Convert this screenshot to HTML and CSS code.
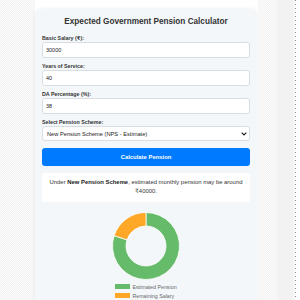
FILE: index.html
```html
<!DOCTYPE html>
<html lang="en">
<head>
<meta charset="utf-8">
<title>Expected Government Pension Calculator</title>
<link rel="stylesheet" href="styles.css">
</head>
<body>
<div class="page">
  <div class="gutter"></div>
  <main class="card">
    <h1 class="title">Expected Government Pension Calculator</h1>
    <div class="field">
      <label class="label" for="salary">Basic Salary (₹):</label>
      <input class="input" id="salary" type="text" value="30000">
    </div>
    <div class="field">
      <label class="label" for="years">Years of Service:</label>
      <input class="input" id="years" type="text" value="40">
    </div>
    <div class="field">
      <label class="label" for="da">DA Percentage (%):</label>
      <input class="input" id="da" type="text" value="38">
    </div>
    <div class="field">
      <label class="label" for="scheme">Select Pension Scheme:</label>
      <div class="select-wrap">
        <select class="select" id="scheme">
          <option>New Pension Scheme (NPS - Estimate)</option>
          <option>Old Pension Scheme (OPS)</option>
        </select>
        <svg class="chev" width="6" height="4" viewBox="0 0 6 4"><path d="M0.7 0.7 L3 3 L5.3 0.7" fill="none" stroke="#222" stroke-width="1.2"/></svg>
      </div>
    </div>
    <button class="button" type="button">Calculate Pension</button>
    <div class="result">Under <b>New Pension Scheme</b>, estimated monthly pension may be around ₹40000.</div>
    <div class="chart">
      <svg width="68" height="68" viewBox="0 0 68 68">
        <path d="M34 0.5 A33.5 33.5 0 1 1 2.14 23.65 L14.98 27.82 A20 20 0 1 0 34 14 Z" fill="#66bb6a" stroke="#fff" stroke-width="0.8"/>
        <path d="M2.14 23.65 A33.5 33.5 0 0 1 34 0.5 L34 14 A20 20 0 0 0 14.98 27.82 Z" fill="#ffa726" stroke="#fff" stroke-width="0.8"/>
      </svg>
      <ul class="legend">
        <li class="legend-item"><span class="swatch swatch-green"></span>Estimated Pension</li>
        <li class="legend-item"><span class="swatch swatch-orange"></span>Remaining Salary</li>
      </ul>
    </div>
  </main>
  <div class="side"></div>
  <div class="band"></div>
  <div class="side-thin"></div>
  <div class="dots"></div>
  <div class="end"></div>
</div>
</body>
</html>
```
FILE: styles.css
```css
* { box-sizing: border-box; }
html, body { margin: 0; padding: 0; }
body {
  font-family: "Liberation Sans", "DejaVu Sans", Arial, sans-serif;
  color: #333;
  background: #fff;
}
.page {
  display: flex;
  height: 300px;
  overflow: hidden;
}
.gutter, .side, .side-thin {
  background: repeating-conic-gradient(#f3f3f3 0 25%, #fbfbfb 0 50%) 0 0 / 2px 2px;
}
.gutter { width: 35px; flex: none; }
.side { width: 19px; flex: none; }
.band { width: 16px; flex: none; background: #f2f2f2; }
.side-thin { width: 2px; flex: none; }
.dots {
  width: 1px; flex: none;
  background: repeating-linear-gradient(to bottom, #8a8a8a 0 1px, transparent 1px 4px);
}
.end { width: 4px; flex: none; background: #fff; }

.card {
  width: 223px;
  flex: none;
  margin-top: 9px;
  padding: 8px 8px 0 7px;
  background: #f4f7fa;
  border-radius: 7px 7px 0 0;
  box-shadow: 0 0 4px rgba(0,0,0,0.07);
  display: flex;
  flex-direction: column;
}
.title {
  margin: 0 0 7px;
  font-size: 8.2px;
  line-height: 10px;
  font-weight: bold;
  text-align: center;
  color: #333;
}
.field {
  display: flex;
  flex-direction: column;
  margin-bottom: 4px;
}
.label {
  font-size: 5.3px;
  line-height: 8px;
  font-weight: bold;
  color: #333;
}
.input, .select {
  display: block;
  width: 100%;
  height: 16px;
  border: 1px solid #d9dee4;
  border-radius: 3px;
  background: #fff;
  padding: 0 3px;
  font-family: inherit;
  font-size: 5.5px;
  color: #222;
  outline: none;
}
.select-wrap { position: relative; }
.select {
  height: 15px;
  padding: 0 4px;
  appearance: none;
  -webkit-appearance: none;
  font-size: 5.7px;
}
.chev {
  position: absolute;
  right: 3px;
  top: 5.5px;
}
.button {
  margin-top: 3px;
  height: 18px;
  border: none;
  border-radius: 3px;
  background: #007bff;
  color: #fff;
  font-family: inherit;
  font-size: 5.9px;
  font-weight: bold;
  padding: 0;
}
.result {
  margin-top: 7px;
  background: #fff;
  border-radius: 3px;
  padding: 5px 5px;
  font-size: 5.9px;
  line-height: 9.5px;
  text-align: center;
  color: #333;
}
.result b { color: #222; }
.chart {
  margin-top: 10px;
  display: flex;
  flex-direction: column;
  align-items: center;
}
.chart svg { display: block; }
.legend {
  list-style: none;
  margin: 2.5px 0 0;
  padding: 0;
}
.legend-item {
  display: flex;
  align-items: center;
  height: 9px;
  font-size: 5.3px;
  color: #666;
}
.swatch {
  width: 15px;
  height: 4.5px;
  margin-right: 2px;
}
.swatch-green { background: #66bb6a; }
.swatch-orange { background: #ffa726; }
```
